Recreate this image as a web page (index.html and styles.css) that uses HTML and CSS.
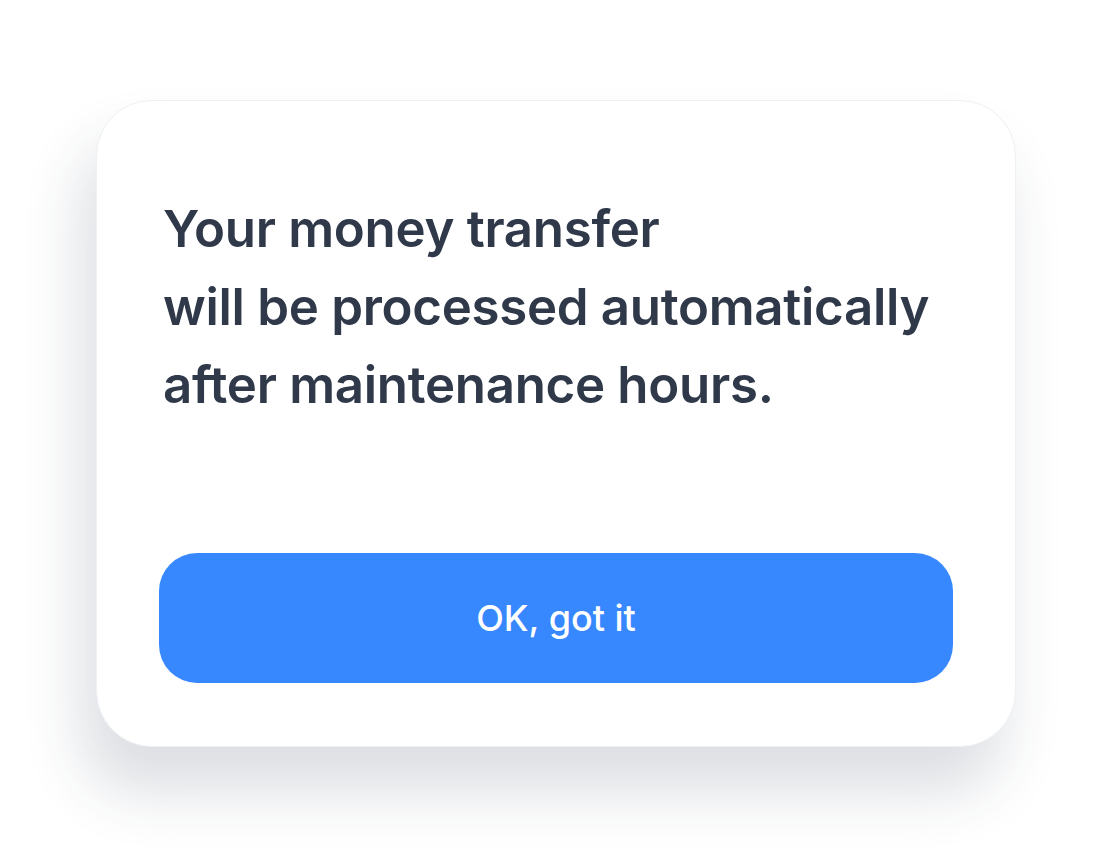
FILE: index.html
```html
<!DOCTYPE html>
<html lang="en">
<head>
<meta charset="utf-8">
<link rel="stylesheet" href="styles.css">
</head>
<body>
  <div class="page">
    <div class="card">
      <p class="message">Your money transfer<br>will be processed automatically<br>after maintenance hours.</p>
      <button class="btn">OK, got it</button>
    </div>
  </div>
</body>
</html>
```
FILE: styles.css
```css
html, body {
  margin: 0;
  padding: 0;
  background: #ffffff;
}
body {
  min-height: 848px;
}
.page {
  box-sizing: border-box;
  min-height: 848px;
  padding: 100px 0 0 96px;
}
.card {
  box-sizing: border-box;
  width: 920px;
  height: 647px;
  background: #ffffff;
  border-radius: 56px;
  border: 1px solid #eef0f3;
  box-shadow: -14px 44px 60px rgba(40, 52, 75, 0.16);
  padding: 89px 62px 63px 62px;
  display: flex;
  flex-direction: column;
}
.message {
  margin: 0;
  padding-left: 4px;
  font-family: Inter, "Noto Sans", sans-serif;
  font-weight: 600;
  font-size: 51px;
  line-height: 78px;
  color: #2f394a;
  letter-spacing: -0.3px;
}
.btn {
  margin-top: auto;
  height: 130px;
  width: 100%;
  border: none;
  border-radius: 38px;
  background: #3788ff;
  color: #ffffff;
  font-family: Inter, "Noto Sans", sans-serif;
  font-weight: 500;
  font-size: 36px;
  cursor: pointer;
}
```
